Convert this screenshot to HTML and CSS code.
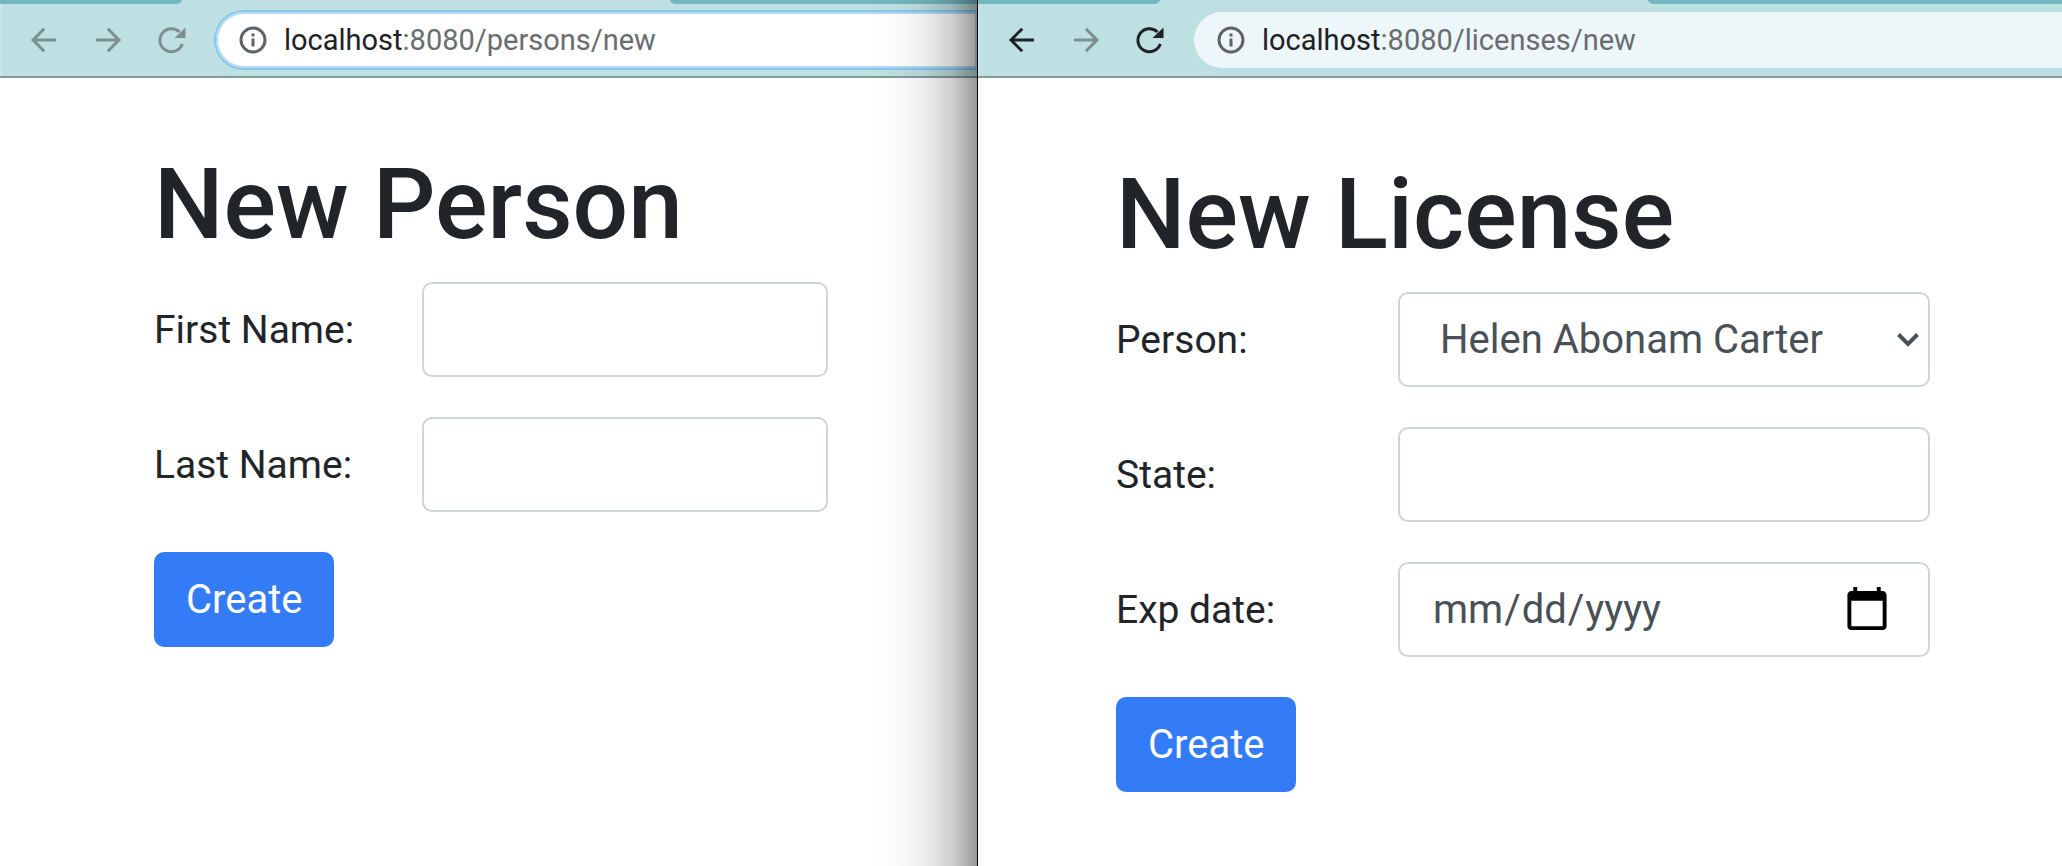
FILE: index.html
```
<!DOCTYPE html>
<html lang="en">
<head>
<meta charset="utf-8">
<title>New Person / New License</title>
<link rel="stylesheet" href="styles.css">
</head>
<body>
<svg class="sprite" aria-hidden="true">
  <symbol id="back" viewBox="0 0 28 28"><path d="M26 14H3M14.200 2.800L3 14l11.200 11.200"/></symbol>
  <symbol id="forward" viewBox="0 0 28 28"><path d="M2 14h23M13.800 2.800L25 14 13.800 25.200"/></symbol>
  <symbol id="reload" viewBox="0 0 28 28"><path d="M24.300 18A11.500 11.500 0 1 1 21.500 6"/><path class="solid" d="M27.500 1.500v10.500H16.500z"/></symbol>
  <symbol id="info" viewBox="0 0 28 28"><circle cx="14" cy="14" r="12"/><path d="M14 12.500V20.500M14 7.500V10.500"/></symbol>
</svg>
<div class="desktop">
  <section class="window window-back">
    <header class="toolbar">
      <div class="tabs"><span class="tab-left"></span><span class="tab-right"></span></div>
      <div class="nav">
        <button class="nav-btn dim" type="button" aria-label="Back"><svg class="icon"><use href="#back"/></svg></button>
        <button class="nav-btn dim" type="button" aria-label="Forward"><svg class="icon"><use href="#forward"/></svg></button>
        <button class="nav-btn dim" type="button" aria-label="Reload"><svg class="icon"><use href="#reload"/></svg></button>
        <div class="address focused">
          <svg class="icon info"><use href="#info"/></svg>
          <div class="url" role="textbox" aria-label="Address" contenteditable="true" spellcheck="false"><span class="host">localhost</span>:8080/persons/new</div>
        </div>
      </div>
    </header>
    <main class="page page-person">
      <h1>New Person</h1>
      <form class="form">
        <div class="row">
          <label for="first">First Name:</label>
          <input class="control" id="first" type="text">
        </div>
        <div class="row">
          <label for="last">Last Name:</label>
          <input class="control" id="last" type="text">
        </div>
        <button class="create" type="button">Create</button>
      </form>
    </main>
  </section>
  <section class="window window-front">
    <header class="toolbar">
      <div class="tabs"><span class="tab-left"></span><span class="tab-right"></span></div>
      <div class="nav">
        <button class="nav-btn" type="button" aria-label="Back"><svg class="icon"><use href="#back"/></svg></button>
        <button class="nav-btn dim" type="button" aria-label="Forward"><svg class="icon"><use href="#forward"/></svg></button>
        <button class="nav-btn" type="button" aria-label="Reload"><svg class="icon"><use href="#reload"/></svg></button>
        <div class="address">
          <svg class="icon info"><use href="#info"/></svg>
          <div class="url" role="textbox" aria-label="Address" contenteditable="true" spellcheck="false"><span class="host">localhost</span>:8080/licenses/new</div>
        </div>
      </div>
    </header>
    <main class="page page-license">
      <h1>New License</h1>
      <form class="form">
        <div class="row">
          <label for="person">Person:</label>
          <div class="select">
            <select class="control" id="person"><option>Helen Abonam Carter</option></select>
            <svg class="chevron" viewBox="0 0 24 16" aria-hidden="true"><path d="M2.500 2.500L12 12l9.500-9.500"/></svg>
          </div>
        </div>
        <div class="row">
          <label for="state">State:</label>
          <input class="control" id="state" type="text">
        </div>
        <div class="row">
          <label for="exp">Exp date:</label>
          <input class="control date" id="exp" type="date">
        </div>
        <button class="create" type="button">Create</button>
      </form>
    </main>
  </section>
</div>
</body>
</html>
```
FILE: styles.css
```
* { box-sizing: border-box; }

body {
  margin: 0;
  background: #fff;
  color: #212529;
  font-family: Roboto, "Liberation Sans", sans-serif;
  font-size: 39px;
  line-height: 60px;
}

.sprite { display: none; }

.desktop {
  display: grid;
  grid-template-columns: 978fr 1084fr;
  min-height: 100vh;
}

.window {
  position: relative;
  min-width: 0;
  overflow: hidden;
  background: #fff;
}

.window-back { border-right: 1px solid #000; }

/* Shadow cast by the front window */
.window-back::after {
  content: "";
  position: absolute;
  inset: 0 0 0 auto;
  width: 104px;
  pointer-events: none;
  background: linear-gradient(to right, rgba(0, 0, 0, 0), rgba(0, 0, 0, .02) 25%, rgba(0, 0, 0, .07) 50%, rgba(0, 0, 0, .18) 75%, rgba(0, 0, 0, .4));
}

.toolbar {
  height: 78px;
  background: #bee0e2;
  border-bottom: 2px solid #879a9b;
  box-shadow: inset 2px 0 #c9e5e7;
}

.tabs {
  display: flex;
  justify-content: space-between;
  height: 4px;
}

.tab-left, .tab-right { background: #73b8bf; }
.tab-left { width: 182px; border-bottom-right-radius: 12px 8px; }
.tab-right { width: calc(100% - 670px); border-bottom-left-radius: 12px 8px; }

.nav {
  display: flex;
  align-items: center;
  height: 72px;
  padding-left: 30px;
}

.nav-btn {
  display: flex;
  margin: 0 36px 0 0;
  padding: 0;
  border: 0;
  background: none;
  color: #202124;
}

.dim { color: #7d8e92; }

.icon {
  width: 28px;
  height: 28px;
  flex: none;
  fill: none;
  stroke: currentColor;
  stroke-width: 3;
}

.solid { fill: currentColor; stroke: none; }

.address {
  display: flex;
  flex: 1;
  align-items: center;
  gap: 17px;
  height: 56px;
  margin-left: -6px;
  padding-left: 23px;
  border-radius: 28px 0 0 28px;
  background: #edf6f8;
  color: #696c70;
}

.focused {
  background: #fff;
  box-shadow: inset 0 0 0 2px #b4dbf8, 0 0 0 2px #8ac5ea;
}

.info { color: #5f6368; }

.url {
  outline: 0;
  font-size: 29px;
  line-height: 36px;
  white-space: nowrap;
}

.host { color: #202124; }

.page { padding-bottom: 60px; }
.page-person { padding-top: 67px; padding-left: 154px; }
.page-license { padding-top: 77px; padding-left: 138px; }

h1 {
  margin: 0 0 17px;
  font-size: 98px;
  font-weight: 500;
  line-height: 120px;
  white-space: nowrap;
}

.form {
  display: flex;
  flex-direction: column;
  align-items: flex-start;
  gap: 40px;
}

.row {
  display: grid;
  align-items: center;
}

.page-person .row { grid-template-columns: 268px 406px; }
.page-license .row { grid-template-columns: 282px 532px; }

.control {
  width: 100%;
  height: 95px;
  margin: 0;
  padding: 0 32px;
  border: 2px solid #ced4da;
  border-radius: 10px;
  background: #fff;
  color: #495057;
  font: inherit;
  font-size: 40px;
}

.date::-webkit-calendar-picker-indicator {
  width: 50px;
  height: 50px;
  margin-right: 4px;
  padding: 0;
  background-size: contain;
}

.select { position: relative; display: flex; }

select.control {
  appearance: none;
  padding-left: 40px;
}

.chevron {
  position: absolute;
  top: 40px;
  right: 10px;
  width: 24px;
  height: 16px;
  fill: none;
  stroke: #495057;
  stroke-width: 4;
  pointer-events: none;
}

.create {
  height: 95px;
  padding: 0 32px;
  border: 0;
  border-radius: 10px;
  background: #347cf6;
  color: #fff;
  font: inherit;
  font-size: 40px;
}
```
